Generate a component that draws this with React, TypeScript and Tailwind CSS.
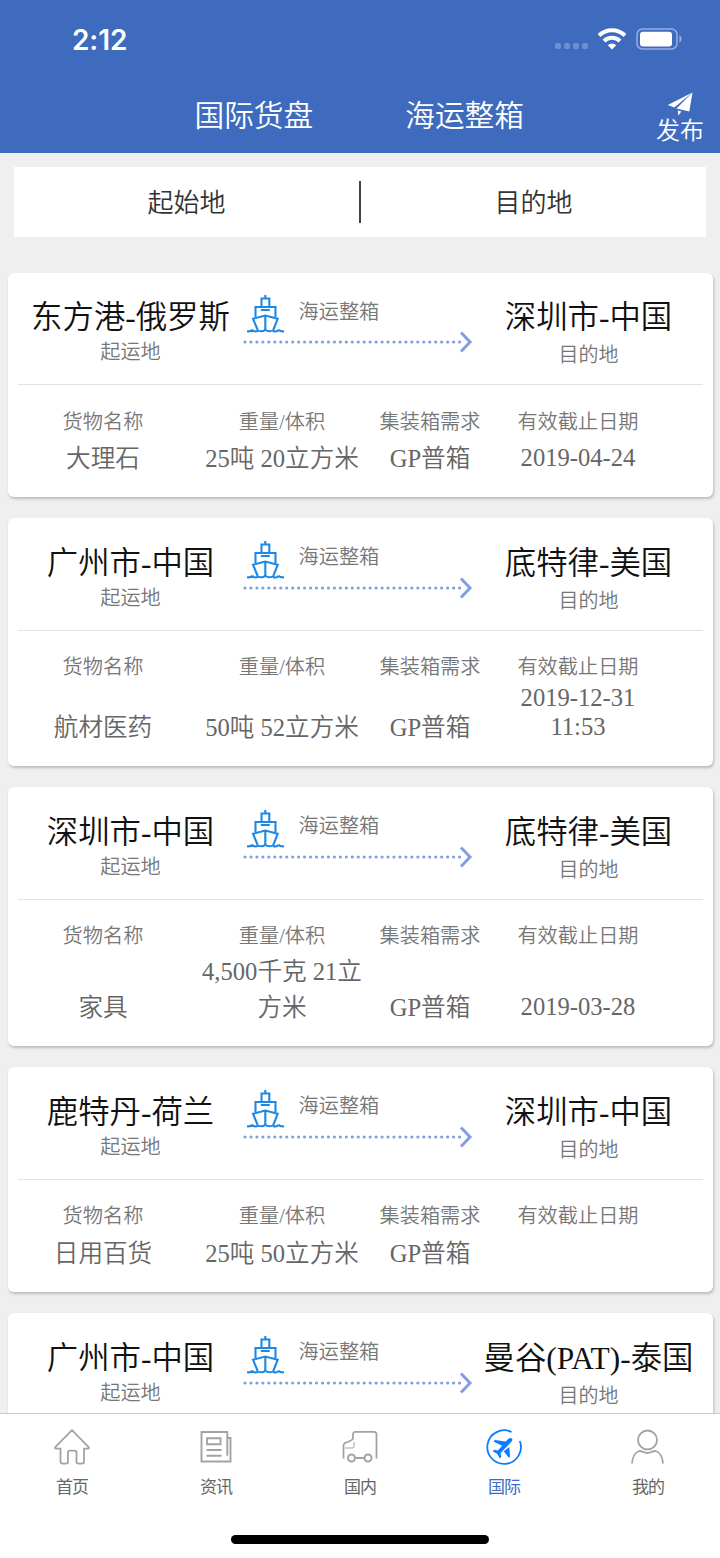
import React from "react";

type Shipment = {
  from: string;
  to: string;
  goods?: string;
  weight?: string[];
  container?: string;
  deadline?: string[];
  size: string;
};

const shipments: Shipment[] = [
  {
    from: "东方港-俄罗斯",
    to: "深圳市-中国",
    goods: "大理石",
    weight: ["25吨 20立方米"],
    container: "GP普箱",
    deadline: ["2019-04-24"],
    size: "h-[224.6px]",
  },
  {
    from: "广州市-中国",
    to: "底特律-美国",
    goods: "航材医药",
    weight: ["50吨 52立方米"],
    container: "GP普箱",
    deadline: ["2019-12-31", "11:53"],
    size: "h-[247.6px]",
  },
  {
    from: "深圳市-中国",
    to: "底特律-美国",
    goods: "家具",
    weight: ["4,500千克 21立", "方米"],
    container: "GP普箱",
    deadline: ["2019-03-28"],
    size: "h-[258.6px]",
  },
  {
    from: "鹿特丹-荷兰",
    to: "深圳市-中国",
    goods: "日用百货",
    weight: ["25吨 50立方米"],
    container: "GP普箱",
    deadline: [],
    size: "h-[224.6px]",
  },
  {
    from: "广州市-中国",
    to: "曼谷(PAT)-泰国",
    size: "h-[224.6px]",
  },
];

const ShipIcon = () => (
  <svg width="40" height="40" viewBox="0 0 40 40" fill="none" stroke="#1e88e5" strokeWidth="2.1">
    <path d="M19.300 1v3M15.500 12.800V4.500h7.800v8.300M9.500 23V13h20v10M14.800 16h9" />
    <path d="M11.500 35.500 7 24.800l12.300-3.300L31.700 24.800l-4.200 10.700M19.300 21.500v15" />
    <path d="M1 37.300c2.500.400 4 0 5.500-1.600M11 35.500c1.500 2.200 6 2.400 8.300.200 2.500 2.200 7 2 8.500-.2M32.500 35.700c1.500 1.600 3 2 5.500 1.600M6.500 35.700c1 1.600 3 2.200 5.500 1.400M27 37c2.500.900 4.500.300 5.500-1.300" />
  </svg>
);

const DottedArrow = () => (
  <svg className="-mt-[3px]" width="230" height="22" viewBox="0 0 230 22" fill="none" stroke="#7f9fe0">
    <path d="M2 11H217" strokeWidth="3.200" strokeLinecap="round" strokeDasharray="0 5.960" />
    <path d="M218 1.500 227 11l-9 9.500" strokeWidth="3" />
  </svg>
);

const Lines = ({ items, leading }: { items: string[]; leading: string }) => (
  <div className={leading}>
    {items.map((line) => (
      <p key={line}>{line}</p>
    ))}
  </div>
);

const ShipmentCard = ({ item }: { item: Shipment }) => (
  <section
    className={`${item.size} flex shrink-0 flex-col rounded-[6px] bg-white px-[10.5px] text-center whitespace-nowrap shadow-[1px_2px_3px_rgba(0,0,0,0.22)]`}
  >
    {/* Route */}
    <div className="flex h-[112.500px] shrink-0 border-b border-[#e2e2e2]">
      <div className="w-[225px] pt-[27.600px]">
        <h2 className="text-[31.400px] leading-[36px] text-[#111]">{item.from}</h2>
        <p className="mt-[2.600px] text-[20.200px] leading-[26px] text-[#777]">起运地</p>
      </div>
      <div className="w-[232px] pt-[21.500px]">
        <div className="flex items-center pl-[3px]">
          <ShipIcon />
          <span className="-mt-[5px] ml-[12.500px] text-[20.200px] leading-[26px] text-[#777]">海运整箱</span>
        </div>
        <DottedArrow />
      </div>
      <div className="flex w-[227px] flex-col items-center pt-[27.600px]">
        <h2 className="text-[31.400px] leading-[36px] text-[#111]">{item.to}</h2>
        <p className="mt-[5.600px] text-[20px] leading-[26px] text-[#777]">目的地</p>
      </div>
    </div>

    {/* Cargo details */}
    {item.goods && (
      <div className="grid grow grid-cols-[170px_188px_108px_188px] grid-rows-[26px_1fr] pt-[23.500px] pb-[20.500px] text-[24.600px] text-[#666]">
        <p className="text-[20.200px] leading-[26px] text-[#777]">货物名称</p>
        <p className="text-[20.200px] leading-[26px] text-[#777]">重量/体积</p>
        <p className="text-[20.200px] leading-[26px] text-[#777]">集装箱需求</p>
        <p className="text-[20.200px] leading-[26px] text-[#777]">有效截止日期</p>
        <p className="self-end leading-[36px]">{item.goods}</p>
        <div className="self-end">
          <Lines items={item.weight ?? []} leading="leading-[36px]" />
        </div>
        <p className="self-end leading-[36px]">{item.container}</p>
        <div className="self-end pb-[4.500px]">
          <Lines items={item.deadline ?? []} leading="leading-[29px]" />
        </div>
      </div>
    )}
  </section>
);

const StatusBar = () => (
  <div className="flex h-[78px] items-center justify-between pr-[37px] pl-[72px]">
    <span className="mt-[2px] font-['Inter'] text-[28px] font-semibold tracking-[-0.1px]">2:12</span>
    <div className="flex items-center">
      <div className="mt-[14px] flex gap-[3px]">
        {[0, 1, 2, 3].map((dot) => (
          <i key={dot} className="h-[6px] w-[6px] rounded-[2px] bg-white/25"></i>
        ))}
      </div>
      <svg className="ml-[9px]" width="30" height="22" viewBox="0 0 30 22" fill="none" stroke="#fff">
        <path d="M2 7.500a18.500 18.500 0 0 1 26 0" strokeWidth="4" />
        <path d="M7 13a11.600 11.600 0 0 1 16 0" strokeWidth="4" />
        <path d="m15 21.500-4.200-4.200a6 6 0 0 1 8.400 0z" fill="#fff" stroke="none" />
      </svg>
      <svg className="ml-[9px]" width="47" height="22" viewBox="0 0 47 22">
        <rect x="1" y="1" width="40" height="20" rx="5.500" fill="none" stroke="#fff" strokeOpacity=".45" strokeWidth="1.500" />
        <rect x="4" y="3.700" width="32" height="14.800" rx="3" fill="#fff" />
        <path d="M43.500 7.500c2.600 1.300 2.600 5.700 0 7z" fill="#fff" fillOpacity=".5" />
      </svg>
    </div>
  </div>
);

const PlaneIcon = () => (
  <svg width="26" height="24" viewBox="0 0 26 24" fill="#fff">
    <path d="M25.500.500.800 13l6.500 2.600z" />
    <path d="M25.500.500 9.500 16.500l12.800 3z" />
    <path d="m10.800 18.500 3.600 1.100-3.100 4z" />
  </svg>
);

const tabs = [
  {
    label: "首页",
    icon: (
      <path d="M18 1.200 1.300 18c-.7 1 0 1.600 1 1.600h4.200v13c0 1.500.5 2 2 2h3.600c1.300 0 1.800-.6 1.800-1.800V23.500c0-1.200.6-1.800 1.800-1.800h5c1.200 0 1.800.6 1.800 1.800v9.300c0 1.200.5 1.800 1.800 1.800H28c1.500 0 2-.5 2-2v-13h3.800c1 0 1.500-.7.800-1.600z" />
    ),
  },
  {
    label: "资讯",
    icon: (
      <g strokeWidth="1.900">
        <path d="M3.500 3h25.800v23.800M29.300 9h3.200v23.500h-29V2" />
        <path d="M9 9.200h13.500v6H9zM8.500 21H23.500M8.500 26.700H23.500" />
      </g>
    ),
  },
  {
    label: "国内",
    icon: (
      <>
        <path d="M1.500 29.500V17c0-1.500.3-2.300 1.500-3l6-2.500c1.500-.7 2-1.300 2-3V5.500C11 3.500 12 2.800 14 2.800H32c1.800 0 2.500.700 2.500 2.500v24.200M13 29h9.500" />
        <path d="M12 13v4c0 1.500-.5 2-2 2H3" strokeWidth="1" />
        <circle cx="9.500" cy="29" r="3.500" strokeWidth="2" />
        <circle cx="26" cy="29" r="3.500" strokeWidth="2" />
      </>
    ),
  },
  {
    label: "国际",
    active: true,
    icon: (
      <>
        <path d="M25.500 3A16.800 16.800 0 1 0 33.800 12" stroke="#0a7cff" />
        <path
          d="M25.800 9.500c1 1 .5 2.400-.4 3.300l-3.500 3.600-3.500 3.600-3.900 4.300.8 3.800-1.500 1.400-2.400-4.600-4.700-2.700 1.500-1.500 3.700.7 4.200-4.600-8.700-4.200 1.600-1.500 10.700 1.500 2.800-2.800c1-1 2.500-1.200 3.300-.3zM23.300 18l.7 9.200-.9 1.800-5.300-6.800z"
          fill="#0a7cff"
          stroke="none"
        />
      </>
    ),
  },
  {
    label: "我的",
    icon: (
      <>
        <circle cx="17.500" cy="11" r="9.500" />
        <path d="M2 34.500c.3-5.600 2.800-11.300 7.500-12.500 3 0 4.500 2 8 2s5-2 8-2c4.700 1.200 7.200 6.900 7.500 12.500" />
      </>
    ),
  },
];

const TabBar = () => (
  <nav className="h-[145px] shrink-0 border-t border-[#c8c8c8] bg-white pt-[15px]">
    <div className="grid grid-cols-5">
      {tabs.map((tab) => (
        <div key={tab.label} className="flex flex-col items-center">
          <svg width="36" height="36" viewBox="0 0 36 36" fill="none" stroke="#a3a3a3" strokeWidth="1.800">
            {tab.icon}
          </svg>
          <span
            className={
              tab.active
                ? "mt-[12px] text-[17px] leading-[22px] font-normal tracking-[-1px] text-[#3d6bbe]"
                : "mt-[12px] text-[17px] leading-[22px] font-normal tracking-[-1px] text-[#666]"
            }
          >
            {tab.label}
          </span>
        </div>
      ))}
    </div>
    <div className="mx-auto mt-[36px] h-[9px] w-[258px] rounded-full bg-black"></div>
  </nav>
);

export default function App() {
  return (
    <div className="flex h-[1558px] w-[720px] flex-col overflow-hidden bg-[#efefef] font-['Liberation_Serif','Noto_Sans_CJK_SC',sans-serif] font-[350]">
      <header className="h-[153px] shrink-0 bg-[#3e6bbe] text-white">
        <StatusBar />
        <div className="flex h-[75px] text-[29.700px] leading-[40px]">
          <span className="ml-[194.500px] pt-[18px]">国际货盘</span>
          <span className="ml-[92px] pt-[18px]">海运整箱</span>
          <div className="ml-auto flex w-[80px] flex-col items-center pt-[14px]">
            <PlaneIcon />
            <span className="text-[24px] leading-[30px]">发布</span>
          </div>
        </div>
      </header>

      <div className="mx-[14px] mt-[14px] flex h-[70px] shrink-0 items-center bg-white text-center text-[26px] text-[#333]">
        <span className="flex-1 pt-[2px]">起始地</span>
        <i className="h-[42px] w-[2px] bg-[#444]"></i>
        <span className="flex-1 pt-[2px]">目的地</span>
      </div>

      <main className="mt-[35.500px] flex min-h-0 flex-1 flex-col gap-[21.400px] overflow-hidden pr-[7px] pl-[7.500px]">
        {shipments.map((item, index) => (
          <ShipmentCard key={index} item={item} />
        ))}
      </main>

      <TabBar />
    </div>
  );
}
